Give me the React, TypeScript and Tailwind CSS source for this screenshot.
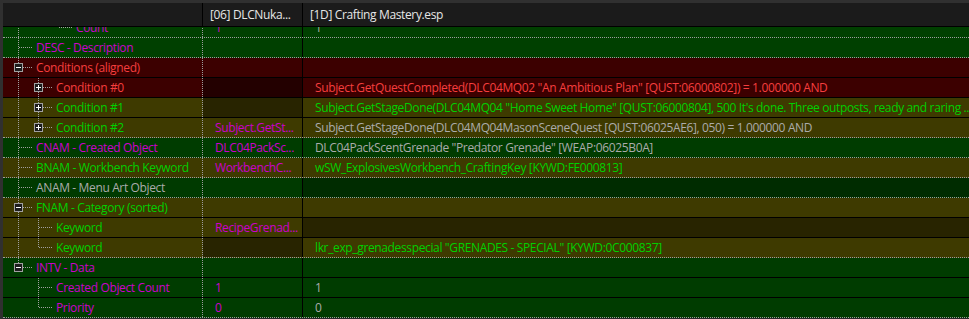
import React from 'react';

type Row = {
    level: number;
    guides: boolean[];
    last?: boolean;
    box?: '+' | '-';
    label: string;
    color: string;
    bg: string;
    sep: 'dot' | 'solid';
    c2?: string;
    c2Color?: string;
    c2Bg?: string;
    c3?: string;
    c3Color?: string;
    c3Bg?: string;
};

const MAG = 'text-[#cc00cc]';
const RED = 'text-[#f63e3e]';
const GRN = 'text-[#00d000]';
const GRY = 'text-[#ababab]';

const GREEN = 'bg-[#004000]';
const RED_BG = 'bg-[#3c0000]';
const OLIVE = 'bg-[#3e3a00]';

const rows: Row[] = [
    { level: 3, guides: [true, false], last: true, label: 'Count', color: MAG, bg: GREEN, sep: 'dot', c2: '1', c2Color: MAG, c3: '1', c3Color: GRY },
    { level: 1, guides: [], label: 'DESC - Description', color: MAG, bg: GREEN, sep: 'dot' },
    { level: 1, guides: [], box: '-', label: 'Conditions (aligned)', color: RED, bg: RED_BG, sep: 'solid' },
    {
        level: 2, guides: [true], box: '+', label: 'Condition #0', color: RED, bg: RED_BG, sep: 'solid',
        c2Bg: 'bg-[#230000]',
        c3: 'Subject.GetQuestCompleted(DLC04MQ02 "An Ambitious Plan" [QUST:06000802]) = 1.000000 AND', c3Color: RED,
    },
    {
        level: 2, guides: [true], box: '+', label: 'Condition #1', color: GRN, bg: OLIVE, sep: 'solid',
        c2Bg: 'bg-[#282400]',
        c3: 'Subject.GetStageDone(DLC04MQ04 "Home Sweet Home" [QUST:06000804], 500 It\'s done. Three outposts, ready and raring ...', c3Color: GRN,
    },
    {
        level: 2, guides: [true], box: '+', last: true, label: 'Condition #2', color: GRN, bg: OLIVE, sep: 'dot',
        c2: 'Subject.GetSt...', c2Color: MAG,
        c3: 'Subject.GetStageDone(DLC04MQ04MasonSceneQuest [QUST:06025AE6], 050) = 1.000000 AND', c3Color: GRY,
    },
    {
        level: 1, guides: [], label: 'CNAM - Created Object', color: MAG, bg: 'bg-[#003c00]', sep: 'dot',
        c2: 'DLC04PackSc...', c2Color: MAG,
        c3: 'DLC04PackScentGrenade "Predator Grenade" [WEAP:06025B0A]', c3Color: GRY,
    },
    {
        level: 1, guides: [], label: 'BNAM - Workbench Keyword', color: GRN, bg: OLIVE, sep: 'dot',
        c2: 'WorkbenchC...', c2Color: MAG,
        c3: 'wSW_ExplosivesWorkbench_CraftingKey [KYWD:FE000813]', c3Color: GRN,
    },
    { level: 1, guides: [], label: 'ANAM - Menu Art Object', color: GRY, bg: 'bg-[#003a00]', sep: 'dot', c3Bg: 'bg-[#002c00]' },
    { level: 1, guides: [], box: '-', label: 'FNAM - Category (sorted)', color: GRN, bg: OLIVE, sep: 'solid' },
    {
        level: 2, guides: [true], label: 'Keyword', color: GRN, bg: OLIVE, sep: 'solid',
        c2: 'RecipeGrenad...', c2Color: MAG, c3Bg: 'bg-[#282400]',
    },
    {
        level: 2, guides: [true], last: true, label: 'Keyword', color: GRN, bg: OLIVE, sep: 'dot',
        c2Bg: 'bg-[#282400]',
        c3: 'lkr_exp_grenadesspecial "GRENADES - SPECIAL" [KYWD:0C000837]', c3Color: GRN,
    },
    { level: 1, guides: [], box: '-', last: true, label: 'INTV - Data', color: MAG, bg: 'bg-[#003c00]', sep: 'solid' },
    { level: 2, guides: [false], label: 'Created Object Count', color: MAG, bg: 'bg-[#003c00]', sep: 'solid', c2: '1', c2Color: MAG, c3: '1', c3Color: GRY },
    { level: 2, guides: [false], last: true, label: 'Priority', color: MAG, bg: 'bg-[#003c00]', sep: 'dot', c2: '0', c2Color: MAG, c3: '0', c3Color: GRY },
];

const DOT = '#a0a0a0';

// dotted tree connectors + expand box for one row
const Tree: React.FC<{ row: Row }> = ({ row }) => {
    const w = 33 + 20 * (row.level - 1);
    const px = 15 + 20 * (row.level - 1);
    const cx = px + 0.5;
    return (
        <svg width={w} height={19} className="shrink-0" shapeRendering="crispEdges">
            {row.guides.map((g, i) =>
                g ? (
                    <line key={i} x1={15.5 + 20 * i} y1={0} x2={15.5 + 20 * i} y2={19} stroke={DOT} strokeDasharray="1 1" />
                ) : null
            )}
            <line x1={cx} y1={0} x2={cx} y2={row.last ? 10 : 19} stroke={DOT} strokeDasharray="1 1" />
            <line x1={px + 1} y1={9.5} x2={px + 15} y2={9.5} stroke={DOT} strokeDasharray="1 1" />
            {row.box && (
                <g>
                    <rect x={cx - 4} y={5.5} width={8} height={8} fill="#1c1c1c" stroke="#a0a0a0" />
                    <line x1={px - 2} y1={9.5} x2={px + 3} y2={9.5} stroke="#ffffff" />
                    {row.box === '+' && <line x1={cx} y1={7} x2={cx} y2={12} stroke="#ffffff" />}
                </g>
            )}
        </svg>
    );
};

const App: React.FC = () => {
    return (
        <div className="w-[969px] h-[319px] overflow-hidden flex flex-col bg-[#2a2a2a] border-t-[3px] border-l-[3px] border-[#303030] font-['Open_Sans',sans-serif] text-[12px] leading-[19px] tracking-[-0.36px]">
            {/* Header */}
            <div className="flex h-[24px] shrink-0 bg-[#1b1b1b] border-b border-black text-[#e6e6e6] relative z-10">
                <div className="w-[200px] border-r border-black" />
                <div className="w-[100px] border-r border-black pl-[7px] flex items-center whitespace-nowrap overflow-hidden">
                    [06] DLCNuka...
                </div>
                <div className="flex-1 pl-[7px] flex items-center whitespace-nowrap">[1D] Crafting Mastery.esp</div>
            </div>

            {/* Tree rows */}
            <div className="flex-1 overflow-hidden">
                {rows.map((r, i) => (
                    <div
                        key={i}
                        className={`flex h-[20px] border-b ${r.sep === 'dot' ? 'border-dotted border-[#9c9c9c]' : 'border-solid border-black'} ${r.bg} ${i === 0 ? 'mt-[-9px]' : ''}`}
                    >
                        <div className={`w-[200px] shrink-0 flex items-center overflow-hidden whitespace-nowrap border-r border-dotted border-[#9c9c9c] ${r.color}`}>
                            <Tree row={r} />
                            <span>{r.label}</span>
                        </div>
                        <div className={`w-[100px] shrink-0 pl-[12px] overflow-hidden whitespace-nowrap border-r border-black ${r.c2Bg ?? ''} ${r.c2Color ?? ''}`}>
                            {r.c2}
                        </div>
                        <div className={`flex-1 pl-[12px] overflow-hidden whitespace-nowrap ${r.c3Bg ?? ''} ${r.c3Color ?? ''}`}>
                            {r.c3}
                        </div>
                    </div>
                ))}
            </div>
        </div>
    );
};

export default App;
